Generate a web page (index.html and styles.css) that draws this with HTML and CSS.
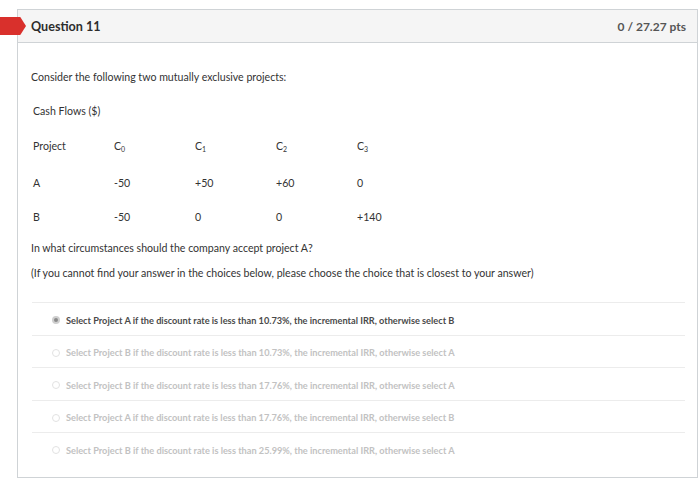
FILE: index.html
```html
<!DOCTYPE html>
<html>
<head>
<meta charset="utf-8">
<link rel="stylesheet" href="styles.css">
</head>
<body>
<div class="flag"></div>
<div class="card">
  <div class="header">
    <span class="title">Question 11</span>
    <span class="pts">0 / 27.27 pts</span>
  </div>
  <div class="body">
    <p class="intro">Consider the following two mutually exclusive projects:</p>
    <p class="caption">Cash Flows ($)</p>
    <div class="table">
      <div class="row">
        <span class="cell">Project</span>
        <span class="cell">C<sub>0</sub></span>
        <span class="cell">C<sub>1</sub></span>
        <span class="cell">C<sub>2</sub></span>
        <span class="cell">C<sub>3</sub></span>
      </div>
      <div class="row">
        <span class="cell">A</span>
        <span class="cell">-50</span>
        <span class="cell">+50</span>
        <span class="cell">+60</span>
        <span class="cell">0</span>
      </div>
      <div class="row">
        <span class="cell">B</span>
        <span class="cell">-50</span>
        <span class="cell">0</span>
        <span class="cell">0</span>
        <span class="cell">+140</span>
      </div>
    </div>
    <p class="question">In what circumstances should the company accept project A?</p>
    <p class="note">(If you cannot find your answer in the choices below, please choose the choice that is closest to your answer)</p>
    <div class="answers">
      <div class="answer selected"><span class="radio"></span>Select Project A if the discount rate is less than 10.73%, the incremental IRR, otherwise select B</div>
      <div class="answer"><span class="radio"></span>Select Project B if the discount rate is less than 10.73%, the incremental IRR, otherwise select A</div>
      <div class="answer"><span class="radio"></span>Select Project B if the discount rate is less than 17.76%, the incremental IRR, otherwise select A</div>
      <div class="answer"><span class="radio"></span>Select Project A if the discount rate is less than 17.76%, the incremental IRR, otherwise select B</div>
      <div class="answer"><span class="radio"></span>Select Project B if the discount rate is less than 25.99%, the incremental IRR, otherwise select A</div>
    </div>
  </div>
</div>
</body>
</html>
```

FILE: styles.css
```css
html, body {
  margin: 0;
  padding: 0;
  background: #ffffff;
  font-family: Lato, "Open Sans", "Liberation Sans", sans-serif;
  color: #333333;
}

body {
  padding: 9px 2px 0 17px;
  position: relative;
}

.flag {
  position: absolute;
  left: 0;
  top: 17px;
  width: 26px;
  height: 18px;
  background: #d9302c;
  clip-path: polygon(0 0, 78% 0, 100% 50%, 78% 100%, 0 100%);
}

.card {
  width: 681px;
  height: 469px;
  box-sizing: border-box;
  border: 1px solid #cfd3d6;
  background: #ffffff;
}

.header {
  height: 33px;
  box-sizing: border-box;
  background: #f5f5f5;
  border-bottom: 1px solid #cfd3d6;
  display: flex;
  align-items: center;
  justify-content: space-between;
  padding: 1px 11px 0 13px;
}

.title {
  font-size: 12.6px;
  font-weight: 700;
  color: #2d2d2d;
}

.pts {
  font-size: 12px;
  font-weight: 700;
  color: #555555;
}

.body {
  padding: 27px 11px 0 13px;
}

p {
  margin: 0;
}

.intro {
  font-size: 10.6px;
  line-height: 14px;
}

.caption {
  font-size: 10.6px;
  line-height: 14px;
  margin-top: 20px;
  padding-left: 2px;
}

.table {
  margin-top: 21px;
  padding-left: 2px;
  display: flex;
  flex-direction: column;
  gap: 20px;
}

.row {
  display: flex;
  font-size: 10.6px;
  line-height: 14px;
}

.cell {
  width: 81px;
}

.cell sub {
  font-size: 7px;
  vertical-align: -2px;
}

.question {
  font-size: 10.6px;
  line-height: 14px;
  margin-top: 17px;
}

.note {
  font-size: 10.6px;
  line-height: 14px;
  margin-top: 11px;
}

.answers {
  margin-top: 22px;
  margin-left: 1px;
  margin-right: 1px;
}

.answer {
  height: 32.5px;
  box-sizing: border-box;
  border-top: 1px solid #ececec;
  display: flex;
  align-items: center;
  padding-left: 20px;
  padding-top: 3px;
  font-size: 9.2px;
  font-weight: 700;
  color: #c2c2c2;
}

.answer.selected {
  color: #4a4a4a;
}

.radio {
  width: 8px;
  height: 8px;
  box-sizing: border-box;
  border-radius: 50%;
  border: 1px solid #e2e2e2;
  margin-right: 6px;
  flex: none;
}

.answer.selected .radio {
  border: 2px solid #cfcfcf;
  background: #8a8a8a;
}
```
